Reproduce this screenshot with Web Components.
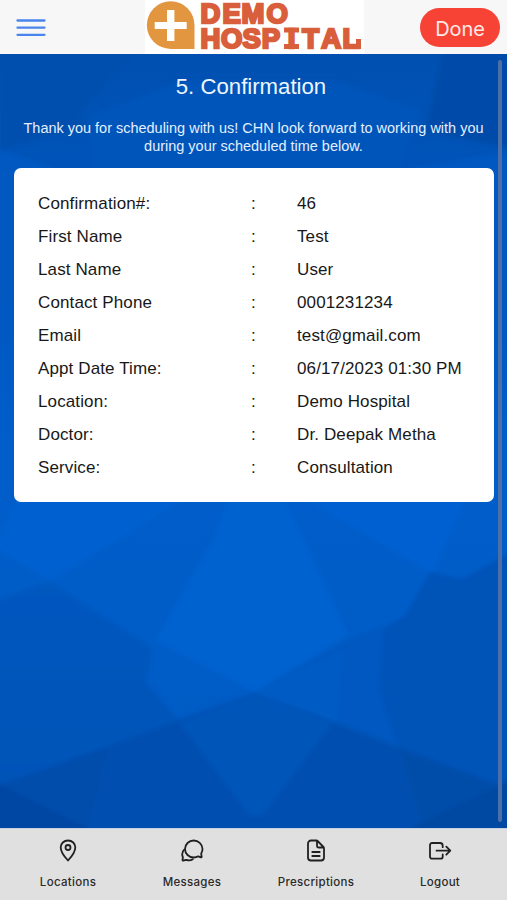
<!DOCTYPE html>
<html lang="en"><head><meta charset="utf-8"><title>Demo Hospital</title>
<style>html,body{margin:0;height:100%;overflow:hidden}body{font-family:"Liberation Sans",Arial,sans-serif}</style></head>
<body><hospital-app></hospital-app>
<script>
function define(name, html){
  const t=document.createElement('template');t.innerHTML=html;
  customElements.define(name,class extends HTMLElement{
    constructor(){super();this.attachShadow({mode:'open'}).appendChild(t.content.cloneNode(true));}
  });
}
define('brand-logo',`<style>:host{display:block;width:219px;height:54px;background:#fff}svg{display:block}</style>
<svg width="219" height="54" viewBox="145 0 219 54"><path d="M170.700 1.200a23.850 23.850 0 1 0 0 47.700H194.500V25A23.850 23.850 0 0 0 170.700 1.200Z" fill="#e29640"/><path d="M167 10h7.400v12h12.300v7H174.400v12H167V29h-12.300v-7H167z" fill="#fff"/>
<g fill="#d95f3c"><text stroke="#d95f3c" stroke-width="2.400" font-family="Liberation Sans,Arial,sans-serif" font-weight="700" font-size="27.500"><tspan x="200.500 222.500 241.500 266.500" y="23">DEMO</tspan><tspan x="200.500 221 242.500 261.800 287.700 302.300 321.300 342.500" y="47.800">HOSPITAL</tspan></text><path d="M284 27.600h15v5h-15zM284 44h15v5h-15zM356 39h5v10h-5z"/></g></svg>`);
define('menu-button',`<style>:host{display:block}svg{display:block}</style><svg width="30" height="20" viewBox="0 0 30 20"><path d="M1.500 2.500h27M1.500 9.700h27M1.500 16.800h27" stroke="#4a85ee" stroke-width="2.300" stroke-linecap="round"/></svg>`);
define('pill-button',`<style>:host{display:flex;align-items:center;justify-content:center;box-sizing:border-box;width:80px;height:39px;border-radius:20px;background:#f74336;color:#ffe9e6;font:400 20px/37px Inter,sans-serif;padding-top:3px;letter-spacing:-.1px}</style><slot></slot>`);
define('app-header',`<style>:host{display:grid;grid-template-columns:145px 219px 1fr;align-items:center;height:54px;background:#f7f7f7;flex:none}menu-button{margin-left:16px;margin-top:2px}pill-button{justify-self:end;margin-right:7px;margin-top:1px}</style><menu-button></menu-button><brand-logo></brand-logo><pill-button>Done</pill-button>`);
define('facet-backdrop',`<style>:host{display:block;position:absolute;inset:0}svg{display:block;width:100%;height:100%}</style>
<svg viewBox="0 54 507 774" preserveAspectRatio="none"><defs><linearGradient id="g" x1="0" y1="0" x2="0" y2="1"><stop offset="0" stop-color="#0050b1"/><stop offset=".2" stop-color="#0055bb"/><stop offset=".5" stop-color="#005dca"/><stop offset=".7" stop-color="#005dc8"/><stop offset="1" stop-color="#005ac3"/></linearGradient><linearGradient id="d" x1="0" y1="0" x2="0" y2="1"><stop offset="0" stop-color="#0058bf"/><stop offset="1" stop-color="#0053b7"/></linearGradient><filter id="s"><feGaussianBlur stdDeviation="2"/></filter></defs>
<rect y="54" width="507" height="774" fill="url(#g)"/><g filter="url(#s)">
<path d="M0 40H145L78 115 90 125 0 150z" fill="#004fae"/><path d="M90 115L180 82 340 82 420 110 400 170H90z" fill="#0055ba"/><path d="M445 40H520V150L425 132z" fill="#004ca9"/><path d="M410 168L520 150V300H410z" fill="#0058c0"/><path d="M-5 148L55 168V300H-5z" fill="#0058c0"/>
<path d="M20 490H200L50 581-5 548z" fill="#0061cf"/><path d="M290 490H470L432 573z" fill="#0061d1"/><path d="M231 490H281L348 635 255 692 155 641 214 538z" fill="#0062cf"/>
<path d="M50 581L152 648 146 682 181 723-5 790V600z" fill="url(#d)"/><path d="M430 572L462 579 520 548V795L255 692 348 640 405 616z" fill="#0058c0"/><path d="M430 572L462 579 520 548V795L400 750 380 690 384 630 405 616z" fill="#0053b7"/><path d="M255 692L343 650 337 724z" fill="#005bc4"/>
<path d="M255 692L520 793V840H-5V787z" fill="#0050b0"/><path d="M255 692L331 724 262 815H250L180 723z" fill="#0055b9"/><path d="M-5 787L108 748 88 830z" fill="#004dab"/><path d="M400 750L520 793V828H423z" fill="#004da9"/><path d="M-5 782L88 828V840H-5z" fill="#0047a4"/><path d="M520 775L410 828V840H520z" fill="#0049a3"/></g></svg>`);
define('detail-row',`<style>:host{display:grid;grid-template-columns:213px 46px 1fr;height:33px;align-items:center;font-size:17px;line-height:20px;color:#181818;white-space:nowrap;letter-spacing:.12px}</style><slot name="label"></slot><span>:</span><slot></slot>`);
define('detail-card',`<style>:host{display:block;box-sizing:border-box;background:#fff;border-radius:7px;margin:0 13px 0 14px;height:334px;padding:19px 24px}</style><slot></slot>`);
define('confirm-page',`<style>:host{display:block;position:relative;flex:1;overflow:hidden}section{position:relative}h1{margin:0;padding-top:20px;text-align:center;font-weight:400;font-size:22.200px;line-height:26px;color:#eef6ff;padding-right:5px}p{margin:20px 0 13px;text-align:center;font-size:14.480px;line-height:17.500px;color:#e4efff;white-space:nowrap}i{position:absolute;right:5px;top:6px;width:4px;height:762px;border-radius:2px;background:#4c6fa8}</style>
<facet-backdrop></facet-backdrop><section><h1>5. Confirmation</h1><p>Thank you for scheduling with us! CHN look forward to working with you<br>during your scheduled time below.</p><detail-card>
${[['Confirmation#:','46'],['First Name','Test'],['Last Name','User'],['Contact Phone','0001231234'],['Email','test@gmail.com'],['Appt Date Time:','06/17/2023 01:30 PM'],['Location:','Demo Hospital'],['Doctor:','Dr. Deepak Metha'],['Service:','Consultation']].map(([a,b])=>`<detail-row><span slot="label">${a}</span><span>${b}</span></detail-row>`).join('')}
</detail-card></section><i></i>`);
define('tab-item',`<style>:host{display:flex;flex-direction:column;align-items:center;width:124px;color:#2a2a2a;font:500 11.500px/16px Inter,sans-serif;letter-spacing:.3px}::slotted(svg){width:24px;height:24px;margin-bottom:11px;fill:none;stroke:#202020;stroke-width:1.800;stroke-linecap:round;stroke-linejoin:round}</style><slot name="icon"></slot><slot></slot>`);
define('tab-bar',`<style>:host{display:flex;box-sizing:border-box;flex:none;height:72px;background:#e0e0e0;border-top:1px solid #c4d2e2;padding:10px 5px 0 6px}</style>
<tab-item><svg slot="icon" viewBox="0 0 24 24"><path d="M12 1.500c-4.200 0-7.300 3-7.300 6.900C4.700 13 9.700 19 12 21.500c2.300-2.500 7.300-8.500 7.300-13.100C19.300 4.500 16.200 1.500 12 1.500z"/><circle cx="12" cy="8.500" r="2.500"/></svg>Locations</tab-item>
<tab-item><svg slot="icon" viewBox="0 0 24 24"><path d="M21.600 17.800l-.4-3.400c.9-1.300 1.400-2.900 1.300-4.600C22.200 5.200 18.400 1.500 13.700 1.500 8.900 1.500 5 5.300 5 10s3.900 8.500 8.700 8.500c1.600 0 3.200-.4 4.500-1.200l2.800 1c.4.100.7-.1.600-.5z"/><path d="M4.200 10.700c-2 2.100-2.400 5.100-1.300 7.500L2.500 21c0 .4.300.6.700.5l3.200-.6c2.300.9 4.700.5 6.400-.7"/></svg>Messages</tab-item>
<tab-item><svg slot="icon" viewBox="0 0 24 24"><path d="M20 9.800V18.500a3 3 0 0 1-3 3H7a3 3 0 0 1-3-3V4.500a3 3 0 0 1 3-3h5.500c.5 0 .8.200 1.100.5l5.900 6c.3.300.5.600.5 1.800zM13 2V7A1.500 1.500 0 0 0 14.500 8.500H19.500M8.300 13h7.400M8.300 17h7.400"/></svg>Prescriptions</tab-item>
<tab-item><svg slot="icon" viewBox="0 0 24 24"><path d="M14.700 15.500v2.200a2 2 0 0 1-2 2H4a2 2 0 0 1-2-2V6a2 2 0 0 1 2-2h8a2.700 2.700 0 0 1 2.700 2.500v1.700M18.300 7.700l4 4-4 4M8.500 11.700h13.300"/></svg>Logout</tab-item>`);
define('hospital-app',`<style>:host{display:flex;flex-direction:column;height:100vh;width:100%}</style><app-header></app-header><confirm-page></confirm-page><tab-bar></tab-bar>`);
</script></body></html>
